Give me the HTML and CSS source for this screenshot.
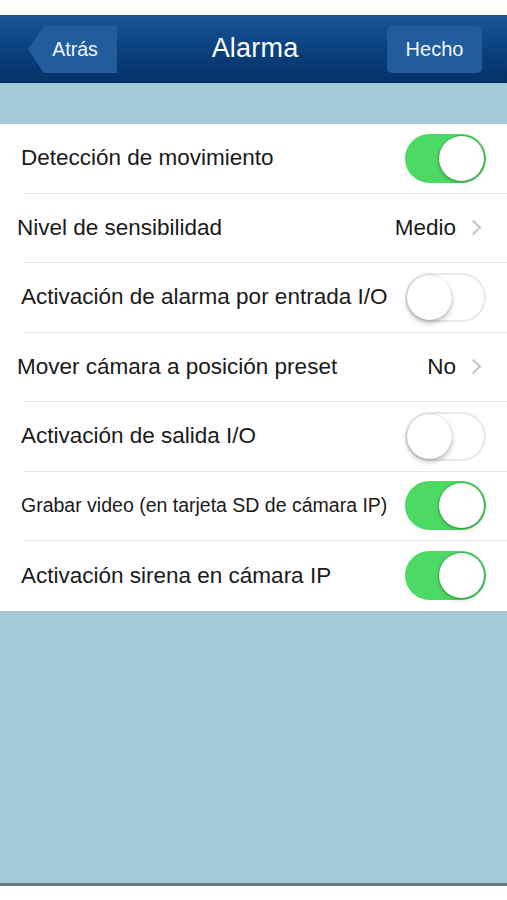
FILE: index.html
```html
<!DOCTYPE html>
<html lang="es">
<head>
    <meta charset="UTF-8">
    <meta name="viewport" content="width=device-width, initial-scale=1.0">
    <title>Alarma</title>
    <link rel="stylesheet" href="styles.css">
</head>
<body>
    <div class="status-space"></div>

    <header class="navbar">
        <button class="nav-btn back">Atrás</button>
        <h1>Alarma</h1>
        <button class="nav-btn done">Hecho</button>
    </header>

    <div class="band"></div>

    <ul class="settings">
        <li class="row">
            <span class="label">Detección de movimiento</span>
            <span class="switch on"><span class="knob"></span></span>
        </li>
        <li class="row">
            <span class="label shifted">Nivel de sensibilidad</span>
            <span class="value">Medio <span class="chevron"></span></span>
        </li>
        <li class="row">
            <span class="label">Activación de alarma por entrada I/O</span>
            <span class="switch"><span class="knob"></span></span>
        </li>
        <li class="row">
            <span class="label shifted">Mover cámara a posición preset</span>
            <span class="value">No <span class="chevron"></span></span>
        </li>
        <li class="row">
            <span class="label">Activación de salida I/O</span>
            <span class="switch"><span class="knob"></span></span>
        </li>
        <li class="row">
            <span class="label small">Grabar video (en tarjeta SD de cámara IP)</span>
            <span class="switch on"><span class="knob"></span></span>
        </li>
        <li class="row last">
            <span class="label">Activación sirena en cámara IP</span>
            <span class="switch on"><span class="knob"></span></span>
        </li>
    </ul>

    <div class="filler"></div>
</body>
</html>
```

FILE: styles.css
```css
body {
    font-family: "Liberation Sans", Arial, sans-serif;
    background-color: #fff;
    margin: 0;
    padding: 0;
    color: #1a1a1a;
}
.status-space {
    height: 15px;
}
.navbar {
    height: 68px;
    display: grid;
    grid-template-columns: 1fr auto 1fr;
    align-items: center;
    padding: 0 25px 0 28px;
    background: linear-gradient(to bottom, #1a5697 0%, #0c4383 45%, #023266 100%);
    border-bottom: 1px solid #001f45;
    box-sizing: border-box;
}
.navbar h1 {
    margin: 0;
    color: #fff;
    font-weight: normal;
    font-size: 27px;
    letter-spacing: 0.2px;
}
.nav-btn {
    height: 47px;
    border: none;
    color: #f2f6fb;
    font-family: inherit;
    font-size: 19px;
    background-color: #215c9c;
    padding: 0;
    margin-top: 2px;
}
.back {
    justify-self: start;
    width: 89px;
    padding-left: 5px;
    font-size: 19.5px;
    clip-path: polygon(16px 0, 100% 0, 100% 100%, 16px 100%, 0 50%);
}
.done {
    justify-self: end;
    width: 95px;
    font-size: 20px;
    border-radius: 5px;
}
.band {
    height: 41px;
    background-color: #a3cbda;
}
.settings {
    list-style: none;
    margin: 0;
    padding: 0;
    background-color: #fff;
}
.row {
    height: 69.5px;
    box-sizing: border-box;
    margin-left: 24px;
    padding-right: 21px;
    display: flex;
    align-items: center;
    justify-content: space-between;
    border-bottom: 1px solid #e6e6e6;
}
.row.last {
    border-bottom: none;
}
.label {
    margin-left: -3px;
    font-size: 22.5px;
    white-space: nowrap;
}
.label.shifted {
    margin-left: -7px;
}
.label.small {
    font-size: 19.5px;
}
.value {
    display: flex;
    align-items: center;
    gap: 12px;
    font-size: 22.5px;
    margin-right: 4px;
}
.chevron {
    width: 9px;
    height: 9px;
    border-top: 2px solid #c4c4c9;
    border-right: 2px solid #c4c4c9;
    transform: rotate(45deg);
    margin-right: 3px;
}
.switch {
    width: 81px;
    height: 49px;
    box-sizing: border-box;
    border-radius: 25px;
    border: 2px solid #e8e8e8;
    background-color: #fff;
    display: flex;
    align-items: center;
    flex-shrink: 0;
}
.switch .knob {
    width: 45px;
    height: 45px;
    border-radius: 50%;
    background-color: #fff;
    box-shadow: 0 3px 5px rgba(0, 0, 0, 0.25), 0 0 1px rgba(0, 0, 0, 0.3);
}
.switch.on {
    background-color: #4cd964;
    border-color: #4cd964;
    justify-content: flex-end;
}
.switch.on .knob {
    box-shadow: 0 2px 4px rgba(0, 0, 0, 0.2), 0 0 0 1px #3fb955;
}
.filler {
    height: 271px;
    background-color: #a3cbda;
    border-top: 1px solid #b4c5cc;
    border-bottom: 3px solid #6d7483;
}
```
